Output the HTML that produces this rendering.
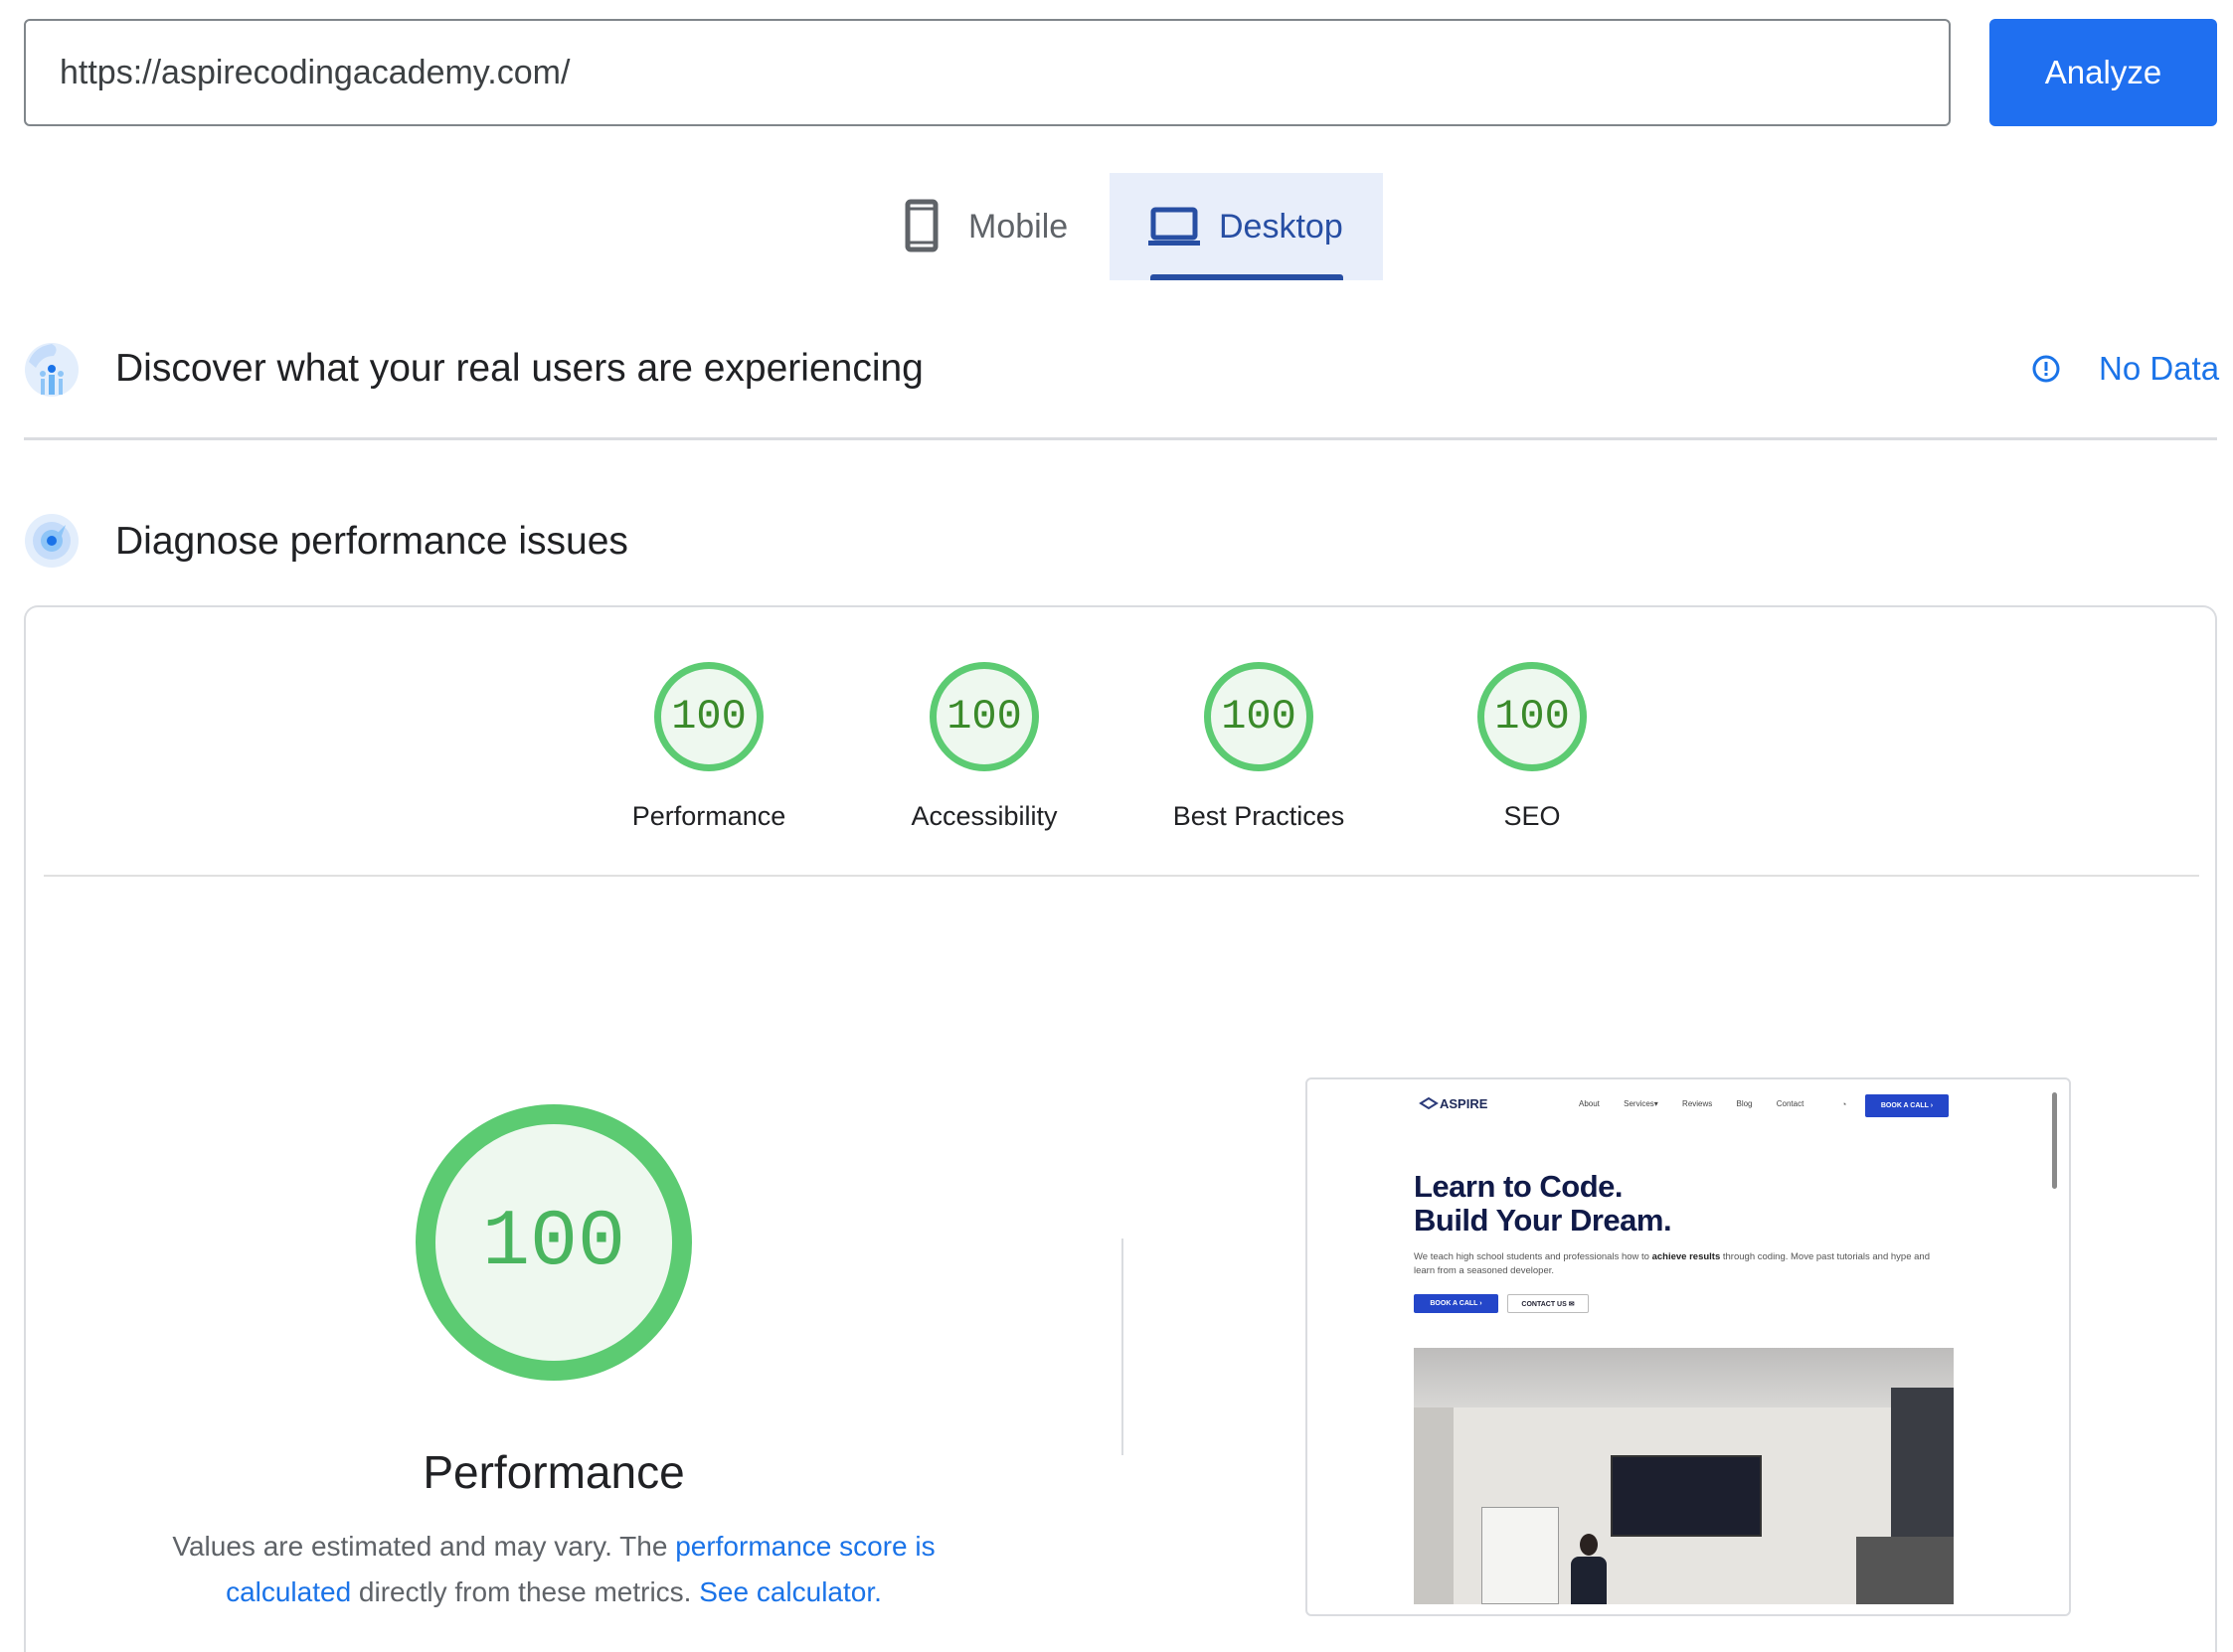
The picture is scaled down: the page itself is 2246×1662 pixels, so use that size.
<!DOCTYPE html>
<html style="width:2246px;height:1662px;overflow:hidden"><head><meta charset="utf-8"><style>
*{margin:0;padding:0;box-sizing:border-box}
body{width:2246px;height:1662px;background:#fff;font-family:"Liberation Sans",sans-serif;position:relative;overflow:hidden;color:#202124}
.a{position:absolute}
.g{position:absolute;width:110px;height:110px;border-radius:50%;border:7px solid #5ccb72;background:#eef8ef;display:flex;align-items:center;justify-content:center;font-family:"Liberation Mono",monospace;font-size:42px;color:#3a8a2a}
.gl{position:absolute;width:260px;text-align:center;font-size:27px;color:#202124}
</style></head><body>
<div class="a" style="left:24px;top:19px;width:1938px;height:108px;border:2px solid #80868b;border-radius:6px"></div>
<div class="a" style="left:60px;top:54px;font-size:34px;color:#3c4043">https://aspirecodingacademy.com/</div>
<div class="a" style="left:2001px;top:19px;width:229px;height:108px;background:#1f6ff0;border-radius:6px;color:#fff;font-size:33px;display:flex;align-items:center;justify-content:center">Analyze</div>

<svg class="a" style="left:910px;top:200px" width="38" height="56" viewBox="0 0 38 56"><rect x="3" y="3" width="28" height="48" rx="3" fill="none" stroke="#5f6368" stroke-width="5"/><line x1="3" y1="10" x2="31" y2="10" stroke="#5f6368" stroke-width="3"/><line x1="3" y1="44" x2="31" y2="44" stroke="#5f6368" stroke-width="3"/></svg>
<div class="a" style="left:974px;top:209px;font-size:34px;color:#5f6368">Mobile</div>
<div class="a" style="left:1116px;top:174px;width:275px;height:108px;background:#e8eefa"></div>
<div class="a" style="left:1157px;top:276px;width:194px;height:6px;background:#274ea3;border-radius:3px 3px 0 0"></div>
<svg class="a" style="left:1155px;top:208px" width="52" height="40" viewBox="0 0 52 40"><rect x="5" y="3" width="42" height="28" rx="2" fill="none" stroke="#274ea3" stroke-width="5"/><rect x="0" y="34" width="52" height="5" fill="#274ea3"/></svg>
<div class="a" style="left:1226px;top:209px;font-size:34px;color:#274ea3">Desktop</div>

<svg class="a" style="left:24px;top:344px" width="56" height="56" viewBox="0 0 56 56"><circle cx="28" cy="28" r="27" fill="#e3eefc"/><path d="M5 20 Q10 5 28 2 Q36 6 30 14 Q18 14 12 26 Z" fill="#c5dcfa"/><circle cx="28" cy="27" r="4" fill="#1a73e8"/><circle cx="19" cy="32" r="3" fill="#8ec5f7"/><circle cx="37" cy="32" r="3" fill="#8ec5f7"/><rect x="25" y="33" width="6" height="20" fill="#6cb4f4"/><rect x="17" y="37" width="4" height="16" fill="#8ec5f7"/><rect x="35" y="37" width="4" height="16" fill="#8ec5f7"/></svg>
<div class="a" style="left:116px;top:349px;font-size:39px;color:#202124">Discover what your real users are experiencing</div>
<svg class="a" style="left:2043px;top:356px" width="30" height="30" viewBox="0 0 30 30"><circle cx="15" cy="15" r="12" fill="none" stroke="#1a73e8" stroke-width="3"/><rect x="13.5" y="8" width="3" height="9" fill="#1a73e8"/><rect x="13.5" y="19" width="3" height="3" fill="#1a73e8"/></svg>
<div class="a" style="left:2111px;top:352px;font-size:33px;color:#1a73e8">No Data</div>
<div class="a" style="left:24px;top:440px;width:2206px;height:3px;background:#dadce0"></div>

<svg class="a" style="left:24px;top:516px" width="56" height="56" viewBox="0 0 56 56"><circle cx="28" cy="28" r="27" fill="#e3eefc"/><circle cx="28" cy="28" r="19" fill="#c5dcfa"/><circle cx="28" cy="28" r="11" fill="#8ec5f7"/><path d="M24 30 L42 12 L34 34 Z" fill="#8ec5f7"/><circle cx="28" cy="28" r="5" fill="#1a73e8"/></svg>
<div class="a" style="left:116px;top:523px;font-size:39px;color:#202124">Diagnose performance issues</div>

<div class="a" style="left:24px;top:609px;width:2206px;height:1060px;border:2px solid #dadce0;border-bottom:none;border-radius:14px 14px 0 0"></div>

<div class="g" style="left:658px;top:666px">100</div>
<div class="g" style="left:935px;top:666px">100</div>
<div class="g" style="left:1211px;top:666px">100</div>
<div class="g" style="left:1486px;top:666px">100</div>
<div class="gl" style="left:583px;top:806px">Performance</div>
<div class="gl" style="left:860px;top:806px">Accessibility</div>
<div class="gl" style="left:1136px;top:806px">Best Practices</div>
<div class="gl" style="left:1411px;top:806px">SEO</div>
<div class="a" style="left:44px;top:880px;width:2168px;height:2px;background:#e0e0e0"></div>

<div class="a" style="left:418px;top:1111px;width:278px;height:278px;border-radius:50%;border:20px solid #5ccb72;background:#eef8ef;display:flex;align-items:center;justify-content:center;font-family:'Liberation Mono',monospace;font-size:80px;color:#4ab55f">100</div>
<div class="a" style="left:257px;top:1454px;width:600px;text-align:center;font-size:46px;color:#202124">Performance</div>
<div class="a" style="left:107px;top:1533px;width:900px;text-align:center;font-size:28px;line-height:46px;color:#5f6368">Values are estimated and may vary. The <span style="color:#1a73e8">performance score is</span><br><span style="color:#1a73e8">calculated</span> directly from these metrics. <span style="color:#1a73e8">See calculator.</span></div>
<div class="a" style="left:1128px;top:1246px;width:2px;height:218px;background:#dadce0"></div>

<div class="a" style="left:1313px;top:1084px;width:770px;height:542px;border:2px solid #dadce0;border-radius:6px;overflow:hidden"></div>
<div class="a" style="left:2064px;top:1099px;width:5px;height:97px;background:#8a8a8a;border-radius:3px"></div>
<svg class="a" style="left:1427px;top:1104px" width="20" height="14" viewBox="0 0 20 14"><path d="M2 6 L10 1 L18 6 L10 11 Z" fill="none" stroke="#2b3a7a" stroke-width="2"/></svg>
<div class="a" style="left:1448px;top:1103px;font-size:13px;color:#1e2a5a;font-weight:bold">ASPIRE</div>
<div class="a" style="left:1588px;top:1106px;font-size:8px;color:#444;word-spacing:22px">About Services▾ Reviews Blog Contact</div>
<div class="a" style="left:1852px;top:1106px;font-size:9px;color:#666">◔</div>
<div class="a" style="left:1876px;top:1101px;width:84px;height:23px;background:#2446c9;border-radius:2px;color:#fff;font-size:7px;font-weight:bold;display:flex;align-items:center;justify-content:center">BOOK A CALL ›</div>
<div class="a" style="left:1422px;top:1177px;font-size:31px;line-height:34px;font-weight:bold;color:#101a48;letter-spacing:-0.5px">Learn to Code.<br>Build Your Dream.</div>
<div class="a" style="left:1422px;top:1258px;width:540px;font-size:9.5px;line-height:14px;color:#555">We teach high school students and professionals how to <b style="color:#222">achieve results</b> through coding. Move past tutorials and hype and learn from a seasoned developer.</div>
<div class="a" style="left:1422px;top:1302px;width:85px;height:19px;background:#2446c9;border-radius:2px;color:#fff;font-size:7px;font-weight:bold;display:flex;align-items:center;justify-content:center">BOOK A CALL ›</div>
<div class="a" style="left:1516px;top:1302px;width:82px;height:19px;border:1px solid #bbb;border-radius:2px;color:#223;font-size:7px;font-weight:bold;display:flex;align-items:center;justify-content:center">CONTACT US ✉</div>
<div class="a" style="left:1422px;top:1356px;width:543px;height:258px;overflow:hidden;background:#dcdad6">
 <div class="a" style="left:0;top:0;width:543px;height:60px;background:linear-gradient(#bdbcbb,#d8d7d5)"></div>
 <div class="a" style="left:0;top:60px;width:543px;height:198px;background:#e6e4e0"></div>
 <div class="a" style="left:0;top:60px;width:40px;height:198px;background:#c8c6c2"></div>
 <div class="a" style="left:480px;top:40px;width:63px;height:218px;background:#3a3d44"></div>
 <div class="a" style="left:198px;top:108px;width:152px;height:82px;background:#1c1f2e;border:2px solid #333"></div>
 <div class="a" style="left:68px;top:160px;width:78px;height:98px;background:#f4f4f2;border:1px solid #999"></div>
 <div class="a" style="left:158px;top:210px;width:36px;height:48px;background:#1d2230;border-radius:8px 8px 0 0"></div>
 <div class="a" style="left:167px;top:187px;width:18px;height:22px;background:#2a2220;border-radius:50%"></div>
 <div class="a" style="left:445px;top:190px;width:98px;height:68px;background:#555"></div>
</div>
</body></html>
